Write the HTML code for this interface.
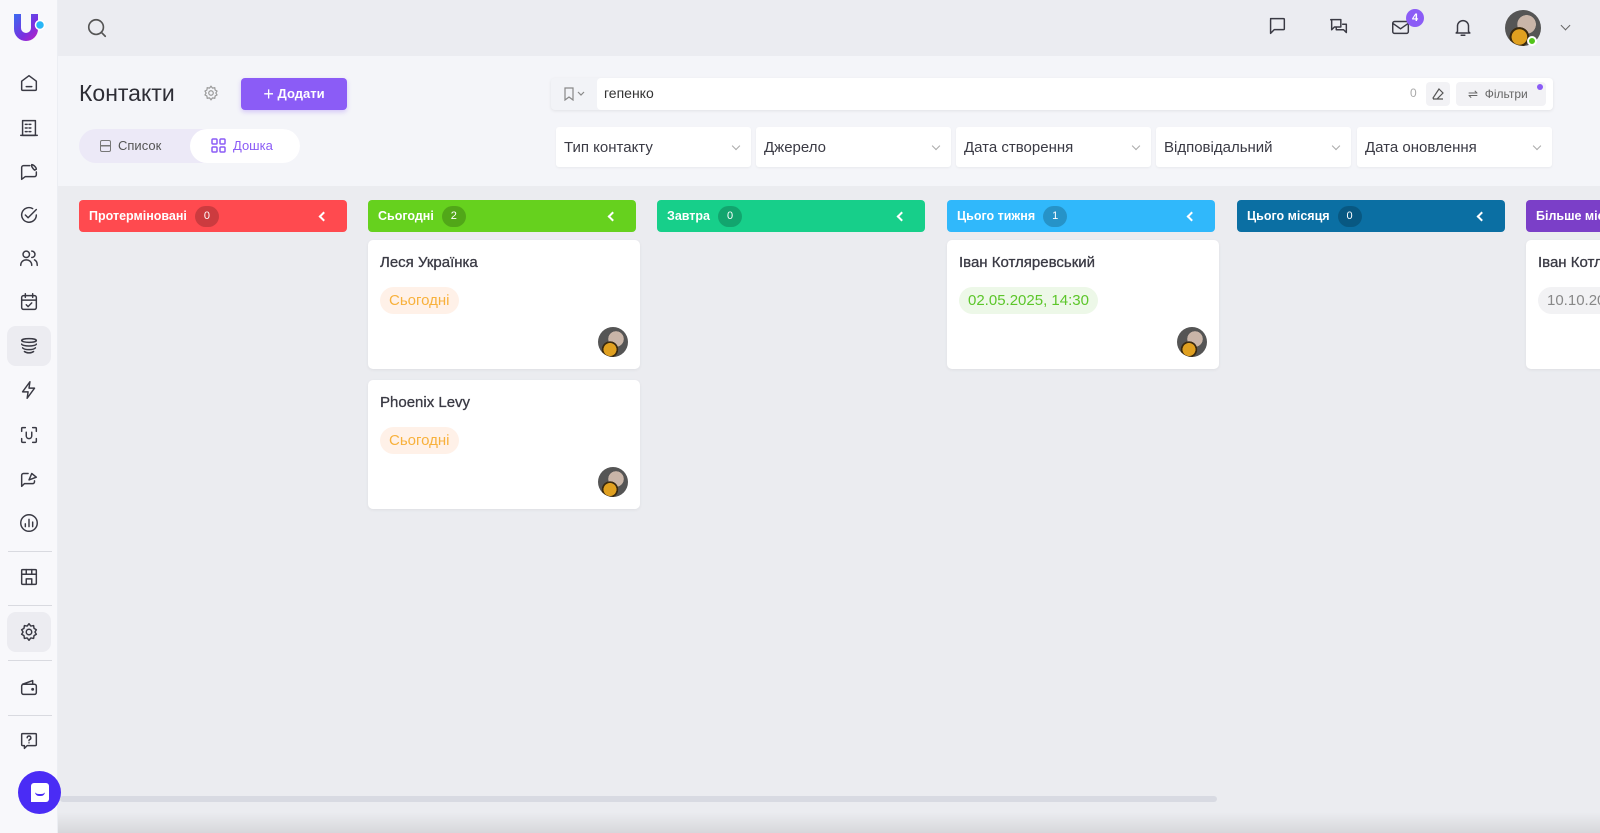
<!DOCTYPE html>
<html><head><meta charset="utf-8"><style>
*{box-sizing:border-box;margin:0;padding:0}
body{width:1600px;height:833px;overflow:hidden;background:#ebecf0;font-family:"Liberation Sans","DejaVu Sans",sans-serif;position:relative;color:#333}
.a{position:absolute}
.sb{left:0;top:0;width:58px;height:833px;background:#f8f8fb;border-right:1px solid #eceef3}
.ic{left:13px;width:32px;height:32px;display:flex;align-items:center;justify-content:center}
.ic svg{width:22px;height:22px;fill:none;stroke:#3a3a44;stroke-width:1.6;stroke-linecap:round;stroke-linejoin:round}
.act{background:#ececf1;border-radius:9px;width:44px;height:40px;left:7px}
.dv{left:8px;width:44px;height:1px;background:#d9dae0}
.top{left:58px;top:0;width:1542px;height:56px;background:#ebecf1}
.hdr{left:58px;top:56px;width:1542px;height:130px;background:#f4f5f9}
.tb svg{width:22px;height:22px;fill:none;stroke:#3a3a44;stroke-width:1.6;stroke-linecap:round;stroke-linejoin:round}
.flt{top:127px;height:40px;width:195px;background:#fff;border-radius:3px;font-size:15px;color:#3a3a44;padding:12px 8px;box-shadow:0 1px 2px rgba(0,0,0,.05)}
.flt:after{content:"";position:absolute;right:12px;top:16px;width:5px;height:5px;border-right:1px solid #aaa;border-bottom:1px solid #aaa;transform:rotate(45deg)}
.col{top:200px;height:32px;width:268px;border-radius:4px;color:#fff;font-weight:bold;font-size:12.5px;padding:0 10px;white-space:nowrap;overflow:hidden;display:flex;align-items:center}
.col b{display:inline-block;margin-left:8px;width:24px;height:21px;border-radius:11px;background:rgba(0,0,0,.2);text-align:center;font-size:11px;line-height:21px;font-weight:normal}
.col i{position:absolute;right:20px;top:13px;width:7px;height:7px;border-left:2px solid #fff;border-bottom:2px solid #fff;transform:rotate(45deg)}
.card{width:272px;height:129px;background:#fff;border-radius:5px;box-shadow:0 1px 3px rgba(0,0,0,.06)}
.card .n{position:absolute;left:12px;top:14px;font-size:15px;color:#3a3a44;-webkit-text-stroke:.3px #3a3a44}
.card .t{position:absolute;left:12px;top:47px;height:27px;border-radius:14px;font-size:15px;padding:5px 9px}
.av{border-radius:50%;background:radial-gradient(circle at 40% 75%,#e0a020 0 22%,#3a2a10 23% 28%,transparent 29%),radial-gradient(circle at 60% 40%,#c9b5a8 0 30%,#555 31%);}
.card .av{position:absolute;right:12px;bottom:12px;width:30px;height:30px}
</style></head><body>
<div class="a sb"></div>
<svg class="a" style="left:12px;top:12px" width="34" height="32" viewBox="0 0 34 32"><defs><linearGradient id="g" x1="0" y1="0" x2="1" y2="1"><stop offset="0" stop-color="#3a6cf0"/><stop offset=".6" stop-color="#7a2fe0"/><stop offset="1" stop-color="#c020c0"/></linearGradient></defs><path d="M2 2h7v14a5 5 0 0 0 10 0V2h7v15a12 12 0 0 1-24 0z" fill="url(#g)"/><circle cx="28" cy="13" r="4.5" fill="#29b6f6" stroke="#fff" stroke-width="1.5"/></svg>
<div class="a ic" style="top:67px"><svg viewBox="0 0 24 24"><path d="M4 10l8-6 8 6v9a1 1 0 0 1-1 1H5a1 1 0 0 1-1-1z"/><path d="M9 16h6"/></svg></div>
<div class="a ic" style="top:112px"><svg viewBox="0 0 24 24"><rect x="5" y="4" width="14" height="16"/><path d="M3 20h18M8 8h2M12 8h2M8 12h2M12 12h2M8 16h2M12 16h2"/></svg></div>
<div class="a ic" style="top:156px"><svg viewBox="0 0 24 24"><path d="M13 5H6a2 2 0 0 0-2 2v13l4-3h10a2 2 0 0 0 2-2v-3"/><path d="M15 4c2 0 5 3 5 5l-2 1c-1-1-2-2-3-4z"/></svg></div>
<div class="a ic" style="top:199px"><svg viewBox="0 0 24 24"><path d="M20 12a8 8 0 1 1-4-7"/><path d="M8 12l3 3 9-9"/></svg></div>
<div class="a ic" style="top:242px"><svg viewBox="0 0 24 24"><circle cx="9" cy="8" r="3.5"/><path d="M3 20c0-4 3-6 6-6s6 2 6 6M15 4.5a3.5 3.5 0 0 1 0 7M18 14c2 1 3 3 3 6"/></svg></div>
<div class="a ic" style="top:286px"><svg viewBox="0 0 24 24"><rect x="4" y="5" width="16" height="15" rx="2"/><path d="M4 10h16M8 3v4M16 3v4M9 15l2 2 4-4"/></svg></div>
<div class="a act" style="top:326px"></div>
<div class="a ic" style="top:330px"><svg viewBox="0 0 24 24"><ellipse cx="12" cy="6" rx="8" ry="2"/><path d="M4 10c0 1 4 2 8 2s8-1 8-2M5 14c1 1 4 2 7 2s6-1 7-2M7 18c1 .8 3 1.5 5 1.5s4-.7 5-1.5"/></svg></div>
<div class="a ic" style="top:374px"><svg viewBox="0 0 24 24"><path d="M13 3L5 14h6l-1 7 8-11h-6z"/></svg></div>
<div class="a ic" style="top:419px"><svg viewBox="0 0 24 24"><path d="M4 8V5a1 1 0 0 1 1-1h3M16 4h3a1 1 0 0 1 1 1v3M20 16v3a1 1 0 0 1-1 1h-3M8 20H5a1 1 0 0 1-1-1v-3M9 9v4a3 3 0 0 0 6 0V9"/></svg></div>
<div class="a ic" style="top:463px"><svg viewBox="0 0 24 24"><path d="M11 6H6a2 2 0 0 0-2 2v12l3-3h9a2 2 0 0 0 2-2v-1"/><path d="M12 13l3-7 5 4z"/></svg></div>
<div class="a ic" style="top:507px"><svg viewBox="0 0 24 24"><circle cx="12" cy="12" r="9"/><path d="M8 16v-3M12 16V8M16 16v-5"/></svg></div>
<div class="a dv" style="top:551px"></div>
<div class="a ic" style="top:561px"><svg viewBox="0 0 24 24"><rect x="4" y="4" width="16" height="16" rx="1"/><path d="M4 9h16M9 20v-6h6v6M9 4v5M15 4v5"/></svg></div>
<div class="a dv" style="top:605px"></div>
<div class="a act" style="top:612px"></div>
<div class="a ic" style="top:616px"><svg viewBox="0 0 24 24"><circle cx="12" cy="12" r="3"/><path d="M12 3l2 2.5 3-.5.5 3L20 9.5 18.5 12l1.5 2.5-2.5 1.5-.5 3-3-.5L12 21l-2-2.5-3 .5-.5-3L4 14.5 5.5 12 4 9.5 6.5 8 7 5l3 .5z"/></svg></div>
<div class="a dv" style="top:660px"></div>
<div class="a ic" style="top:671px"><svg viewBox="0 0 24 24"><path d="M5 9l11-4v4"/><rect x="4" y="9" width="16" height="11" rx="2"/><circle cx="16" cy="14.5" r=".8"/></svg></div>
<div class="a dv" style="top:715px"></div>
<div class="a ic" style="top:725px"><svg viewBox="0 0 24 24"><path d="M5 4h14a1 1 0 0 1 1 1v11a1 1 0 0 1-1 1h-9l-3 3v-3H5a1 1 0 0 1-1-1V5a1 1 0 0 1 1-1z"/><path d="M10 8.5a2 2 0 1 1 2.5 2c-.5.2-.5.6-.5 1.2M12 14v.1"/></svg></div>
<div class="a" style="left:18px;top:771px;width:43px;height:43px;border-radius:50%;background:#4a2cf5;display:flex;align-items:center;justify-content:center"><div style="width:18px;height:19px;background:#fff;border-radius:3px 3px 3px 0;position:relative"><div style="position:absolute;left:4px;top:9px;width:10px;height:4px;border-bottom:2px solid #4a2cf5;border-radius:0 0 6px 6px"></div></div></div>

<div class="a top"></div>
<div class="a hdr"></div>
<svg class="a" style="left:86px;top:17px" width="22" height="22" viewBox="0 0 24 24" fill="none" stroke="#555" stroke-width="1.8" stroke-linecap="round"><circle cx="11" cy="11" r="8"/><path d="M17 17l4 4"/></svg>
<div class="a tb" style="left:1266px;top:15px"><svg viewBox="0 0 24 24"><path d="M5 4h14a1 1 0 0 1 1 1v10a1 1 0 0 1-1 1H9l-4 4V5a1 1 0 0 1 1-1z"/></svg></div>
<div class="a tb" style="left:1328px;top:16px"><svg viewBox="0 0 24 24"><path d="M3 4h11v8H7l-3 3V5zM9 12v3h8l3 3v-9h-4"/></svg></div>
<div class="a tb" style="left:1390px;top:16px"><svg viewBox="0 0 24 24"><rect x="3" y="6" width="17" height="13" rx="2"/><path d="M3 8l8.5 6L20 8"/></svg></div>
<div class="a" style="left:1406px;top:9px;width:18px;height:18px;border-radius:9px;background:#8b5cf6;color:#fff;font-size:11px;font-weight:bold;text-align:center;line-height:18px">4</div>
<div class="a tb" style="left:1452px;top:16px"><svg viewBox="0 0 24 24"><path d="M6 17V11a6 6 0 0 1 12 0v6l1.5 1.5h-15zM10 21h4"/></svg></div>
<div class="a av" style="left:1505px;top:10px;width:36px;height:36px"></div>
<div class="a" style="left:1527px;top:36px;width:10px;height:10px;border-radius:50%;background:#52c41a;border:2px solid #fff"></div>
<div class="a" style="left:1562px;top:22px;width:7px;height:7px;border-right:1.5px solid #666;border-bottom:1.5px solid #666;transform:rotate(45deg)"></div>

<div class="a" style="left:79px;top:80px;font-size:23px;color:#2e2e36">Контакти</div>
<svg class="a" style="left:202px;top:84px" width="18" height="18" viewBox="0 0 24 24" fill="none" stroke="#999" stroke-width="1.6"><circle cx="12" cy="12" r="3"/><path d="M12 3l2 2.5 3-.5.5 3L20 9.5 18.5 12l1.5 2.5-2.5 1.5-.5 3-3-.5L12 21l-2-2.5-3 .5-.5-3L4 14.5 5.5 12 4 9.5 6.5 8 7 5l3 .5z"/></svg>
<div class="a" style="left:241px;top:78px;width:106px;height:32px;border-radius:4px;background:#8b5cf6;color:#fff;font-size:13px;font-weight:bold;text-align:center;line-height:32px;box-shadow:0 2px 5px rgba(139,92,246,.3)"><span style="font-size:18px;font-weight:normal;vertical-align:-2px">+</span> Додати</div>
<div class="a" style="left:79px;top:129px;width:221px;height:34px;border-radius:17px;background:#ece9f7"></div>
<div class="a" style="left:190px;top:129px;width:110px;height:34px;border-radius:17px;background:#fff"></div>
<div class="a" style="left:100px;top:138px;font-size:13px;color:#555"><span style="display:inline-block;width:11px;height:12px;border:1.5px solid #777;border-radius:2px;vertical-align:-2px;background:linear-gradient(#777,#777) center/100% 1.5px no-repeat;margin-right:7px"></span>Список</div>
<div class="a" style="left:211px;top:138px;font-size:13px;color:#8b5cf6"><svg width="15" height="15" viewBox="0 0 15 15" fill="none" stroke="#8b5cf6" stroke-width="1.5" style="vertical-align:-3px;margin-right:7px"><rect x="1" y="1" width="5" height="5" rx="1"/><rect x="9" y="1" width="5" height="5" rx="1"/><rect x="1" y="9" width="5" height="5" rx="1"/><rect x="9" y="9" width="5" height="5" rx="1"/></svg>Дошка</div>

<div class="a" style="left:551px;top:78px;width:1002px;height:32px;border-radius:4px;background:#f2f3f7;box-shadow:0 1px 3px rgba(0,0,0,.08)"></div>
<div class="a" style="left:597px;top:78px;width:956px;height:32px;border-radius:4px;background:#fff"></div>
<svg class="a" style="left:563px;top:87px" width="24" height="14" viewBox="0 0 24 14" fill="none" stroke="#888" stroke-width="1.2"><path d="M2 1h8v12l-4-3-4 3z"/><path d="M15 5l3 3 3-3"/></svg>
<div class="a" style="left:604px;top:85px;font-size:14px;color:#333">гепенко</div>
<div class="a" style="left:1410px;top:86px;font-size:12px;color:#aaa">0</div>
<div class="a" style="left:1426px;top:82px;width:24px;height:24px;background:#f2f2f5;border-radius:4px"></div>
<svg class="a" style="left:1431px;top:87px" width="14" height="14" viewBox="0 0 14 14" fill="none" stroke="#555" stroke-width="1.2"><path d="M8 2l4 4-6 6H3l-1-1 6-9zM2 12h10"/></svg>
<div class="a" style="left:1456px;top:82px;width:90px;height:24px;background:#f2f2f5;border-radius:4px;font-size:12px;color:#666;line-height:24px;padding-left:12px">&#8652;&nbsp; Фільтри</div>
<div class="a" style="left:1537px;top:84px;width:6px;height:6px;border-radius:50%;background:#8b5cf6"></div>

<div class="a flt" style="left:556px">Тип контакту</div>
<div class="a flt" style="left:756px">Джерело</div>
<div class="a flt" style="left:956px">Дата створення</div>
<div class="a flt" style="left:1156px">Відповідальний</div>
<div class="a flt" style="left:1357px">Дата оновлення</div>

<div class="a col" style="left:79px;background:#ff4a4f">Протерміновані<b>0</b><i></i></div>
<div class="a col" style="left:368px;background:#66d11e">Сьогодні<b>2</b><i></i></div>
<div class="a col" style="left:657px;background:#17cf8a">Завтра<b>0</b><i></i></div>
<div class="a col" style="left:947px;background:#30b8fb">Цього тижня<b>1</b><i></i></div>
<div class="a col" style="left:1237px;background:#0b6fa3">Цього місяця<b>0</b><i></i></div>
<div class="a col" style="left:1526px;background:#7b3fc8">Більше місяця<b>0</b></div>

<div class="a card" style="left:368px;top:240px"><div class="n">Леся Українка</div><div class="t" style="background:#fff1e8;color:#f8b13c">Сьогодні</div><div class="av"></div></div>
<div class="a card" style="left:368px;top:380px"><div class="n">Phoenix Levy</div><div class="t" style="background:#fff1e8;color:#f8b13c">Сьогодні</div><div class="av"></div></div>
<div class="a card" style="left:947px;top:240px"><div class="n">Іван Котляревський</div><div class="t" style="background:#edf8e8;color:#5cc62a">02.05.2025, 14:30</div><div class="av"></div></div>
<div class="a card" style="left:1526px;top:240px"><div class="n">Іван Котляревський</div><div class="t" style="background:#f2f2f4;color:#888">10.10.2025, 10:00</div></div>

<div class="a" style="left:60px;top:796px;width:1157px;height:6px;background:#d8dae2;border-radius:3px"></div>
<div class="a" style="left:58px;top:812px;width:1542px;height:21px;background:linear-gradient(rgba(0,0,0,0),rgba(0,0,0,.09))"></div>
</body></html>
